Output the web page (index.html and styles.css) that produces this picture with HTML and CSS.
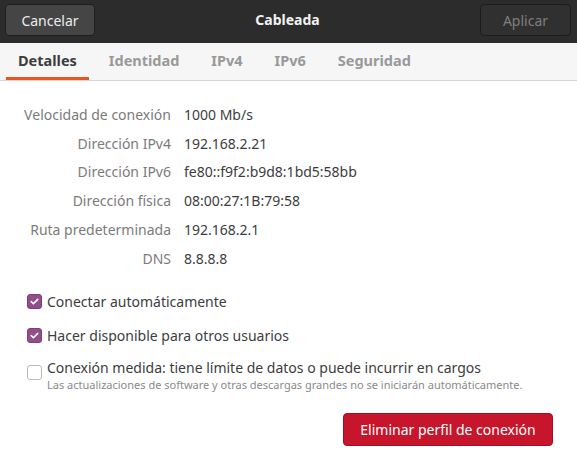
FILE: index.html
```html
<!DOCTYPE html>
<html lang="es">
<head>
<meta charset="utf-8">
<title>Cableada</title>
<link rel="stylesheet" href="styles.css">
</head>
<body>
<div class="dialog">
  <header class="headerbar">
    <button class="hb-btn cancel">Cancelar</button>
    <div class="title">Cableada</div>
    <button class="hb-btn apply" disabled>Aplicar</button>
  </header>
  <nav class="tabs">
    <div class="tab active">Detalles</div>
    <div class="tab">Identidad</div>
    <div class="tab">IPv4</div>
    <div class="tab">IPv6</div>
    <div class="tab">Seguridad</div>
  </nav>
  <main class="content">
    <div class="details">
      <div class="lbl">Velocidad de conexión</div><div class="val">1000 Mb/s</div>
      <div class="lbl">Dirección IPv4</div><div class="val">192.168.2.21</div>
      <div class="lbl">Dirección IPv6</div><div class="val">fe80::f9f2:b9d8:1bd5:58bb</div>
      <div class="lbl">Dirección física</div><div class="val">08:00:27:1B:79:58</div>
      <div class="lbl">Ruta predeterminada</div><div class="val">192.168.2.1</div>
      <div class="lbl">DNS</div><div class="val">8.8.8.8</div>
    </div>
    <div class="checks">
      <label class="check">
        <span class="box checked"><svg viewBox="0 0 16 16" width="16" height="16"><path d="M4 8.2l2.6 2.6L12 5.4" fill="none" stroke="#fff" stroke-width="2" stroke-linecap="round" stroke-linejoin="round"/></svg></span>
        <span class="ctext">Conectar automáticamente</span>
      </label>
      <label class="check">
        <span class="box checked"><svg viewBox="0 0 16 16" width="16" height="16"><path d="M4 8.2l2.6 2.6L12 5.4" fill="none" stroke="#fff" stroke-width="2" stroke-linecap="round" stroke-linejoin="round"/></svg></span>
        <span class="ctext">Hacer disponible para otros usuarios</span>
      </label>
      <label class="check metered">
        <span class="box"></span>
        <span class="cwrap">
          <span class="ctext">Conexión medida: tiene límite de datos o puede incurrir en cargos</span>
          <span class="sub">Las actualizaciones de software y otras descargas grandes no se iniciarán automáticamente.</span>
        </span>
      </label>
    </div>
    <div class="actions">
      <button class="danger">Eliminar perfil de conexión</button>
    </div>
  </main>
</div>
</body>
</html>
```
FILE: styles.css
```css
* { box-sizing: border-box; }
html, body { margin: 0; padding: 0; }
body {
  width: 577px;
  height: 462px;
  background: #ffffff;
  font-family: "Noto Sans", "DejaVu Sans", sans-serif;
  font-size: 14px;
  color: #3d3d3d;
  overflow: hidden;
}
.dialog { display: flex; flex-direction: column; height: 462px; }

.headerbar {
  height: 43px;
  background: #2c2c2c;
  display: grid;
  grid-template-columns: 90px 1fr 91px;
  align-items: start;
  padding: 4px 6px 0 5px;
}
.hb-btn {
  height: 32px;
  border-radius: 4px;
  font-family: inherit;
  font-size: 14px;
  padding: 0;
}
.cancel {
  background: #454545;
  border: 1px solid #1e1e1e;
  color: #ececec;
}
.apply {
  background: #303030;
  border: 1px solid #1c1c1c;
  color: #7e7e7e;
}
.title {
  text-align: center;
  color: #f2f2f2;
  font-weight: bold;
  line-height: 32px;
}

.tabs {
  height: 38px;
  background: #f6f6f6;
  border-bottom: 1px solid #d6d6d6;
  display: flex;
  padding-left: 2px;
}
.tab {
  margin: 0 4px;
  padding: 0 12px;
  font-weight: bold;
  font-size: 14.5px;
  color: #999999;
  line-height: 35px;
  border-bottom: 3px solid transparent;
}
.tab.active {
  color: #3d3d3d;
  border-bottom-color: #e95420;
}

.content { flex: 1; display: flex; flex-direction: column; }

.details {
  display: grid;
  grid-template-columns: 171px 1fr;
  grid-auto-rows: 28.8px;
  column-gap: 13px;
  align-items: center;
  margin-top: 19px;
}
.lbl { text-align: right; color: #7b7b7b; }
.val { color: #3d3d3d; }

.checks {
  margin-top: 19px;
  padding-left: 27px;
  display: flex;
  flex-direction: column;
  gap: 15px;
}
.check { display: flex; align-items: center; gap: 5px; color: #3d3d3d; }
.box {
  width: 15px;
  height: 15px;
  border-radius: 3px;
  border: 1px solid #b9b9b9;
  background: #fff;
  display: flex;
  align-items: center;
  justify-content: center;
  flex: none;
}
.box.checked { background: #924d8b; border-color: #7e3f78; }
.box svg { width: 13px; height: 13px; }
.metered { align-items: flex-start; margin-top: -2px; }
.metered .box { margin-top: 7px; }
.cwrap { display: flex; flex-direction: column; }
.ctext { line-height: 19px; }
.sub { font-size: 11px; color: #8a8a8a; line-height: 15px; }

.actions {
  display: flex;
  justify-content: flex-end;
  padding-right: 24px;
  margin-top: 21px;
}
.danger {
  width: 210px;
  height: 33px;
  background: #c7162b;
  border: 1px solid #a10f20;
  border-radius: 4px;
  color: #ffffff;
  font-family: inherit;
  font-size: 14px;
}
```
